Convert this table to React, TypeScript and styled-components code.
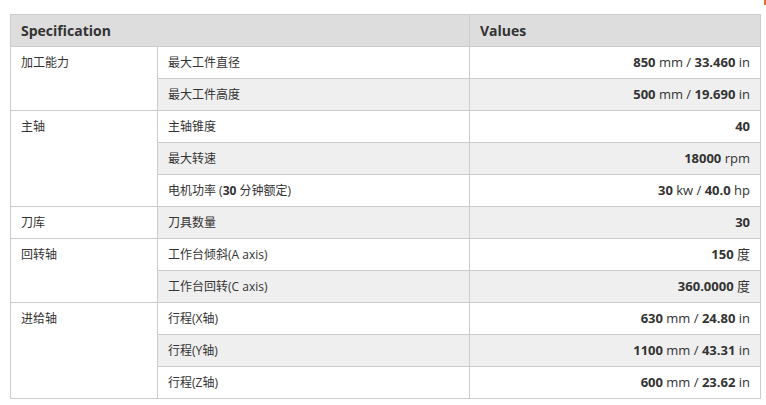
import React from "react";
import styled, { createGlobalStyle } from "styled-components";

type SubRow = { name: React.ReactNode; value: React.ReactNode };
type Group = { label: string; rows: SubRow[] };

const GlobalStyle = createGlobalStyle`
  html, body {
    margin: 0;
    padding: 0;
    background: #fff;
  }
  body {
    font-family: "Open Sans", "Noto Sans CJK SC", sans-serif;
    color: #333;
  }
`;

const Page = styled.div`
  position: relative;
  width: 766px;
  height: 405px;
  padding: 14px 0 0 10px;
  box-sizing: border-box;
`;

const Marker = styled.span`
  position: absolute;
  top: 0;
  right: 0;
  width: 2px;
  height: 5px;
  background: #e8702a;
`;

const Table = styled.table`
  width: 750px;
  border-collapse: collapse;
  table-layout: fixed;
  font-size: 12px;
`;

const HeadCell = styled.th`
  height: 31px;
  padding: 0 10px;
  background: #dddddd;
  border: 1px solid #cccccc;
  text-align: left;
  font-size: 14px;
  font-weight: 700;
  color: #333;
`;

const Cell = styled.td<{ $striped?: boolean; $value?: boolean }>`
  height: 31px;
  line-height: 31px;
  padding: 0 10px;
  border: 1px solid #cccccc;
  background: ${(p) => (p.$striped ? "#efefef" : "#ffffff")};
  text-align: ${(p) => (p.$value ? "right" : "left")};
  font-size: ${(p) => (p.$value ? "13px" : "12px")};
  vertical-align: top;
  color: #333;
  white-space: nowrap;
`;

const Num = styled.b`
  font-weight: 700;
`;

const mmIn = (mm: string, inch: string) => (
  <>
    <Num>{mm}</Num> mm / <Num>{inch}</Num> in
  </>
);

const groups: Group[] = [
  {
    label: "加工能力",
    rows: [
      { name: "最大工件直径", value: mmIn("850", "33.460") },
      { name: "最大工件高度", value: mmIn("500", "19.690") },
    ],
  },
  {
    label: "主轴",
    rows: [
      { name: "主轴锥度", value: <Num>40</Num> },
      {
        name: "最大转速",
        value: (
          <>
            <Num>18000</Num> rpm
          </>
        ),
      },
      {
        name: (
          <>
            电机功率 (<Num>30</Num> 分钟额定)
          </>
        ),
        value: (
          <>
            <Num>30</Num> kw / <Num>40.0</Num> hp
          </>
        ),
      },
    ],
  },
  {
    label: "刀库",
    rows: [{ name: "刀具数量", value: <Num>30</Num> }],
  },
  {
    label: "回转轴",
    rows: [
      {
        name: "工作台倾斜(A axis)",
        value: (
          <>
            <Num>150</Num> 度
          </>
        ),
      },
      {
        name: "工作台回转(C axis)",
        value: (
          <>
            <Num>360.0000</Num> 度
          </>
        ),
      },
    ],
  },
  {
    label: "进给轴",
    rows: [
      { name: "行程(X轴)", value: mmIn("630", "24.80") },
      { name: "行程(Y轴)", value: mmIn("1100", "43.31") },
      { name: "行程(Z轴)", value: mmIn("600", "23.62") },
    ],
  },
];

export default function App() {
  let index = 0;
  return (
    <Page>
      <GlobalStyle />
      <Marker />
      <Table>
        <colgroup>
          <col style={{ width: 147 }} />
          <col style={{ width: 312 }} />
          <col style={{ width: 291 }} />
        </colgroup>
        <thead>
          <tr>
            <HeadCell colSpan={2}>Specification</HeadCell>
            <HeadCell>Values</HeadCell>
          </tr>
        </thead>
        <tbody>
          {groups.map((g) =>
            g.rows.map((r, i) => {
              const striped = index % 2 === 1;
              index += 1;
              return (
                <tr key={`${g.label}-${i}`}>
                  {i === 0 && <Cell rowSpan={g.rows.length}>{g.label}</Cell>}
                  <Cell $striped={striped}>{r.name}</Cell>
                  <Cell $striped={striped} $value>
                    {r.value}
                  </Cell>
                </tr>
              );
            })
          )}
        </tbody>
      </Table>
    </Page>
  );
}
